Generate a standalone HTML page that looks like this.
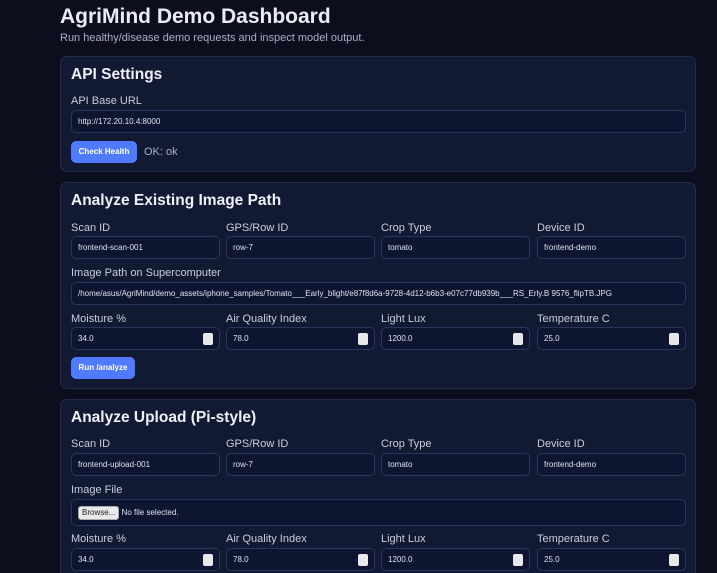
<!DOCTYPE html>
<html><head><style>
*{box-sizing:border-box;margin:0;padding:0}
html,body{width:717px;height:573px;overflow:hidden}
body{background:#0b0f1d;font-family:"Liberation Sans",sans-serif;color:#e6e9f2;position:relative}
.a{position:absolute}
h1{position:absolute;left:60px;top:5px;font-size:21px;font-weight:bold;color:#e9ecf5}
.sub{left:60px;top:32px;font-size:11px;color:#a9b1c7}
.card{position:absolute;left:60px;width:636px;background:#121a33;border:1px solid #222c4c;border-radius:7px}
.ct{position:absolute;left:10px;font-size:15.5px;font-weight:bold;color:#eef0f6}
.lb{position:absolute;font-size:11px;color:#c9cedd}
.in{position:absolute;height:23px;background:#0e1530;border:1px solid #2a3560;border-radius:5px;font-size:8px;color:#dfe3ee;padding-left:6px;line-height:21px;white-space:nowrap;overflow:hidden}
.sp{position:absolute;right:6px;top:5px;width:10px;height:12px;background:#e8e8ea;border-radius:2px}
.btn{position:absolute;height:22px;background:#4f7cff;border-radius:5px;font-size:8px;font-weight:bold;color:#fff;text-align:center;line-height:22px}
</style></head><body>
<h1>AgriMind Demo Dashboard</h1>
<div class="a sub">Run healthy/disease demo requests and inspect model output.</div>

<div class="card" style="top:56px;height:116px">
<div class="ct" style="top:9px">API Settings</div>
<div class="lb" style="left:10px;top:38px">API Base URL</div>
<div class="in" style="left:10px;top:53px;width:615px">http://172.20.10.4:8000</div>
<div class="btn" style="left:10px;top:84px;width:66px">Check Health</div>
<div class="lb" style="left:83px;top:89px;color:#a9b1c7">OK: ok</div>
</div>

<div class="card" style="top:182px;height:207px">
<div class="ct" style="top:9px">Analyze Existing Image Path</div>
<div class="lb" style="left:10px;top:39px">Scan ID</div>
<div class="lb" style="left:165px;top:39px">GPS/Row ID</div>
<div class="lb" style="left:320px;top:39px">Crop Type</div>
<div class="lb" style="left:476px;top:39px">Device ID</div>
<div class="in" style="left:10px;top:53px;width:149px">frontend-scan-001</div>
<div class="in" style="left:165px;top:53px;width:149px">row-7</div>
<div class="in" style="left:320px;top:53px;width:149px">tomato</div>
<div class="in" style="left:476px;top:53px;width:149px">frontend-demo</div>
<div class="lb" style="left:10px;top:84px">Image Path on Supercomputer</div>
<div class="in" style="left:10px;top:99px;width:615px">/home/asus/AgriMind/demo_assets/iphone_samples/Tomato___Early_blight/e87f8d6a-9728-4d12-b6b3-e07c77db939b___RS_Erly.B 9576_flipTB.JPG</div>
<div class="lb" style="left:10px;top:130px">Moisture %</div>
<div class="lb" style="left:165px;top:130px">Air Quality Index</div>
<div class="lb" style="left:320px;top:130px">Light Lux</div>
<div class="lb" style="left:476px;top:130px">Temperature C</div>
<div class="in" style="left:10px;top:144px;width:149px">34.0<div class="sp"></div></div>
<div class="in" style="left:165px;top:144px;width:149px">78.0<div class="sp"></div></div>
<div class="in" style="left:320px;top:144px;width:149px">1200.0<div class="sp"></div></div>
<div class="in" style="left:476px;top:144px;width:149px">25.0<div class="sp"></div></div>
<div class="btn" style="left:10px;top:174px;width:64px">Run /analyze</div>
</div>

<div class="card" style="top:399px;height:190px">
<div class="ct" style="top:9px">Analyze Upload (Pi-style)</div>
<div class="lb" style="left:10px;top:38px">Scan ID</div>
<div class="lb" style="left:165px;top:38px">GPS/Row ID</div>
<div class="lb" style="left:320px;top:38px">Crop Type</div>
<div class="lb" style="left:476px;top:38px">Device ID</div>
<div class="in" style="left:10px;top:53px;width:149px">frontend-upload-001</div>
<div class="in" style="left:165px;top:53px;width:149px">row-7</div>
<div class="in" style="left:320px;top:53px;width:149px">tomato</div>
<div class="in" style="left:476px;top:53px;width:149px">frontend-demo</div>
<div class="lb" style="left:10px;top:84px">Image File</div>
<div class="in" style="left:10px;top:99px;width:615px;height:27px;line-height:25px"><span style="display:inline-block;background:#e9e9ec;color:#222;border:1px solid #aaa;border-radius:3px;padding:0 3px;line-height:12px;font-size:8px">Browse...</span> No file selected.</div>
<div class="lb" style="left:10px;top:133px">Moisture %</div>
<div class="lb" style="left:165px;top:133px">Air Quality Index</div>
<div class="lb" style="left:320px;top:133px">Light Lux</div>
<div class="lb" style="left:476px;top:133px">Temperature C</div>
<div class="in" style="left:10px;top:148px;width:149px">34.0<div class="sp"></div></div>
<div class="in" style="left:165px;top:148px;width:149px">78.0<div class="sp"></div></div>
<div class="in" style="left:320px;top:148px;width:149px">1200.0<div class="sp"></div></div>
<div class="in" style="left:476px;top:148px;width:149px">25.0<div class="sp"></div></div>
</div>
</body></html>
